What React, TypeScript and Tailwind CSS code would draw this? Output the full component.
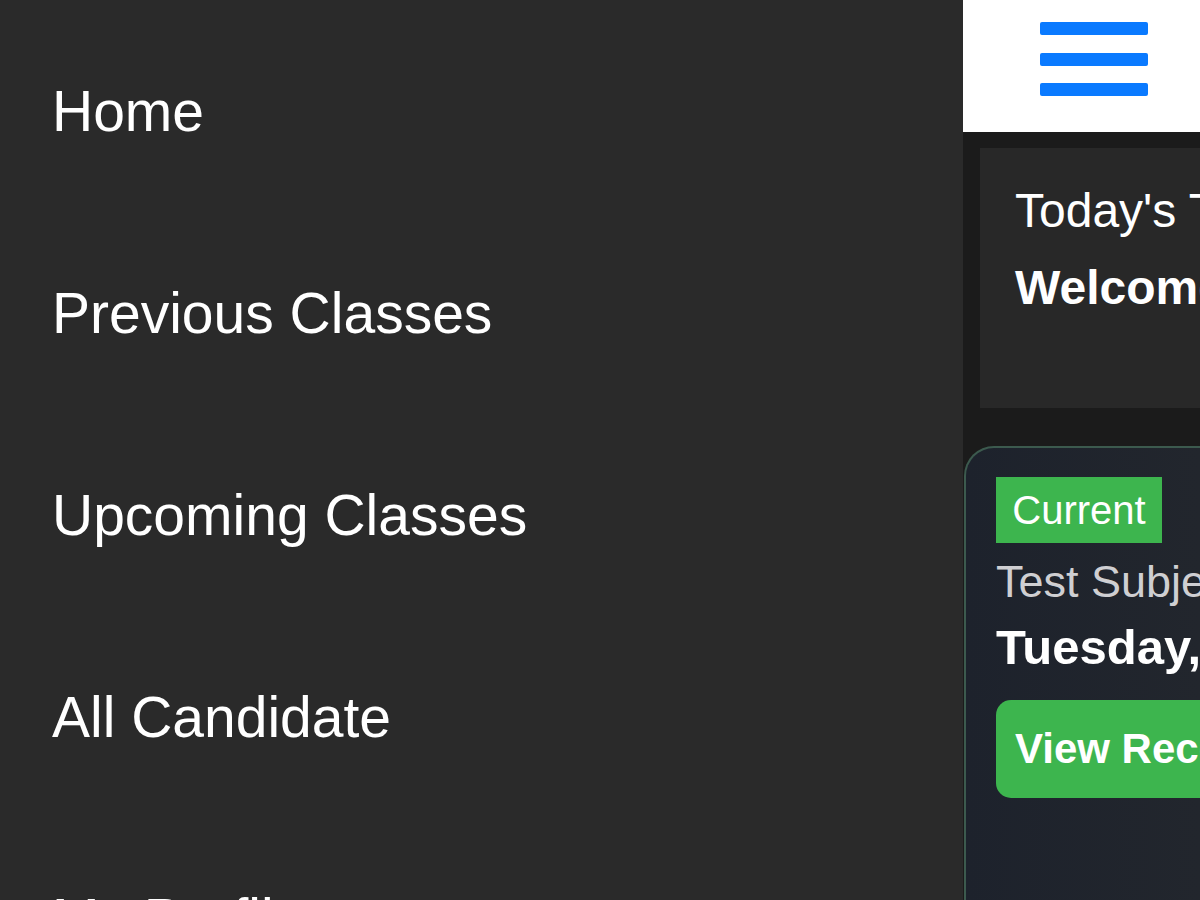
import React from 'react'

const menu = ['Home', 'Previous Classes', 'Upcoming Classes', 'All Candidate', 'My Profile']

export default function App() {
  return (
    <div className="flex h-[900px] w-[1200px] overflow-hidden font-['Liberation_Sans',Arial,sans-serif]">
      {/* Drawer */}
      <nav className="h-full w-[963px] shrink-0 bg-[#2a2a2a] pl-[52px] pt-[83px]">
        {menu.map((item) => (
          <div key={item} className="h-[202px] text-[57px] leading-[57px] text-white">
            {item}
          </div>
        ))}
      </nav>

      {/* Main screen behind the drawer */}
      <div className="flex min-w-0 flex-1 flex-col bg-[#1b1b1b]">
        <header className="flex h-[132px] shrink-0 bg-white pl-[77px] pt-[22px]">
          <div className="flex h-[74px] w-[108px] flex-col justify-between">
            <span className="h-[13px] w-full rounded-[2px] bg-[#0a7aff]" />
            <span className="h-[13px] w-full rounded-[2px] bg-[#0a7aff]" />
            <span className="h-[13px] w-full rounded-[2px] bg-[#0a7aff]" />
          </div>
        </header>

        <div className="flex flex-col pt-[16px]">
          <div className="ml-[17px] h-[260px] overflow-hidden whitespace-nowrap bg-[#282828] pl-[35px] pt-[39px] text-white">
            <p className="text-[48px] leading-none">Today's Timetable</p>
            <p className="mt-[29px] text-[48px] font-bold leading-none">Welcome back</p>
          </div>

          <div className="ml-[1px] mt-[38px] h-[500px] overflow-hidden whitespace-nowrap rounded-tl-[30px] border-l-2 border-t-2 border-[#3c5a4e] bg-gradient-to-r from-[#1d222c] to-[#22262d] pl-[30px] pt-[29px]">
            <span className="inline-flex h-[66px] w-[166px] items-center justify-center bg-[#3db54e] text-[40px] leading-none text-white">
              Current
            </span>
            <p className="mt-[16px] text-[45px] leading-none text-[#cfcfd2]">Test Subject</p>
            <p className="mt-[19px] text-[49px] font-bold leading-none text-white">Tuesday, 10:00 AM</p>
            <button className="mt-[28px] flex h-[98px] w-[400px] items-center rounded-[15px] bg-[#3db54e] pl-[19px] text-[42px] font-bold leading-none text-white">
              View Recording
            </button>
          </div>
        </div>
      </div>
    </div>
  )
}
